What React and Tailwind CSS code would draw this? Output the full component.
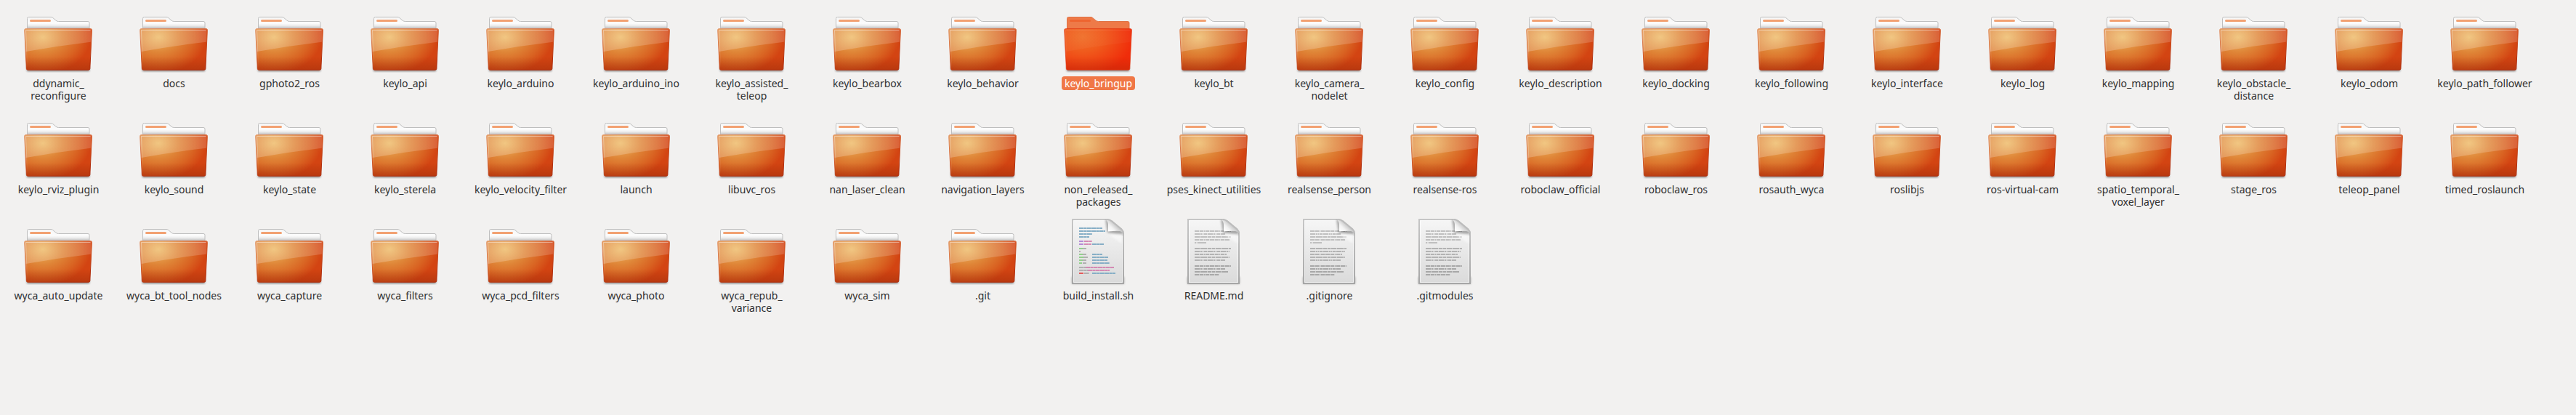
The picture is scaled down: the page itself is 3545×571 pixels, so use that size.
const folders = [
  'ddynamic_\nreconfigure', 'docs', 'gphoto2_ros', 'keylo_api', 'keylo_arduino', 'keylo_arduino_ino',
  'keylo_assisted_\nteleop', 'keylo_bearbox', 'keylo_behavior', 'keylo_bringup', 'keylo_bt',
  'keylo_camera_\nnodelet', 'keylo_config', 'keylo_description', 'keylo_docking', 'keylo_following',
  'keylo_interface', 'keylo_log', 'keylo_mapping', 'keylo_obstacle_\ndistance', 'keylo_odom',
  'keylo_path_follower',
  'keylo_rviz_plugin', 'keylo_sound', 'keylo_state', 'keylo_sterela', 'keylo_velocity_filter', 'launch',
  'libuvc_ros', 'nan_laser_clean', 'navigation_layers', 'non_released_\npackages', 'pses_kinect_utilities',
  'realsense_person', 'realsense-ros', 'roboclaw_official', 'roboclaw_ros', 'rosauth_wyca', 'roslibjs',
  'ros-virtual-cam', 'spatio_temporal_\nvoxel_layer', 'stage_ros', 'teleop_panel', 'timed_roslaunch',
  'wyca_auto_update', 'wyca_bt_tool_nodes', 'wyca_capture', 'wyca_filters', 'wyca_pcd_filters',
  'wyca_photo', 'wyca_repub_\nvariance', 'wyca_sim', '.git',
];

const entries = [
  ...folders.map((name) => ({ name, kind: 'folder', selected: name === 'keylo_bringup' })),
  { name: 'build_install.sh', kind: 'script' },
  { name: 'README.md', kind: 'text' },
  { name: '.gitignore', kind: 'text' },
  { name: '.gitmodules', kind: 'text' },
];

const BLUE = '#86aec6';
const PURPLE = '#b58ad6';
const PINK = '#d48ab4';
const GREEN = '#92d08c';
const GRAY = '#b0b0b0';
const RED = '#e35b5b';

// [y, [x1, x2, colour], ...]
const codeLines = [
  [17, [21, 53, BLUE]],
  [21, [21, 57, BLUE]],
  [25, [21, 39, BLUE]],
  [29, [21, 35, BLUE]],
  [35, [21, 27, PURPLE], [28, 39, PINK]],
  [39, [21, 27, PURPLE], [28, 38, PINK], [39, 55, BLUE]],
  [45, [21, 26, GREEN], [26, 31, GRAY]],
  [49, [21, 23, GRAY]],
  [53, [21, 26, GREEN], [26, 31, GRAY], [39, 53, BLUE]],
  [57, [21, 27, GREEN], [27, 33, GRAY], [39, 61, BLUE]],
  [61, [21, 26, GREEN], [26, 31, GRAY], [39, 60, BLUE]],
  [65, [21, 25, GREEN], [26, 31, GRAY], [39, 63, BLUE]],
  [71, [21, 30, GRAY], [30, 69, PINK]],
  [75, [21, 33, GRAY], [33, 63, PINK]],
  [79, [21, 27, RED], [28, 35, GRAY], [39, 71, BLUE]],
];

const A = '6 1 5 1 1 1 5 1';
const B = '7 1 2 1 1 1 4 1';
const C = '7 1 9 1 5 1 4 1';

// [y, x2, dash pattern]
const textLines = [
  [21, 71, A], [25, 63, B], [29, 71, C], [33, 69, A], [37, 37, '2 2 12 1'],
  [45, 71, C], [49, 69, B], [53, 65, A], [57, 69, C], [61, 63, B],
  [69, 71, A], [73, 63, B], [77, 67, C], [81, 55, A],
];

const FRONT =
  'M2.5 34.5H91.5Q93.5 34.5 93.4 36.5L90.8 89.5Q90.7 91.2 89 91.2H5.2Q3.5 91.2 3.4 89.5L0.7 36.5Q0.6 34.5 2.5 34.5Z';

function SharedDefs() {
  return (
    <svg className="absolute size-0" aria-hidden="true">
      <defs>
        <linearGradient id="tab" x1="0" y1="0" x2="0" y2="1">
          <stop offset="0" stopColor="#f6f6f6" />
          <stop offset="0.4" stopColor="#fcfcfc" />
          <stop offset="0.55" stopColor="#ececec" />
          <stop offset="0.74" stopColor="#bcbcbc" />
        </linearGradient>
        <radialGradient id="body" gradientUnits="userSpaceOnUse" cx="26" cy="46" r="66" gradientTransform="matrix(1 0 0 0.76 0 11)">
          <stop offset="0" stopColor="#edb862" />
          <stop offset="0.42" stopColor="#df8537" />
          <stop offset="0.75" stopColor="#d96322" />
          <stop offset="1" stopColor="#d34412" />
        </radialGradient>
        <radialGradient id="bodyHot" gradientUnits="userSpaceOnUse" cx="26" cy="46" r="70" gradientTransform="matrix(1 0 0 0.75 0 11)">
          <stop offset="0" stopColor="#ef702a" />
          <stop offset="0.4" stopColor="#f05a1c" />
          <stop offset="1" stopColor="#f02c0a" />
        </radialGradient>
        <linearGradient id="foot" x1="0" y1="0" x2="0" y2="1">
          <stop offset="0.68" stopColor="#8a2408" stopOpacity="0" />
          <stop offset="1" stopColor="#8a2408" stopOpacity="0.36" />
        </linearGradient>
        <linearGradient id="rim" x1="0" y1="0" x2="0.5" y2="1">
          <stop offset="0" stopColor="#e2986c" />
          <stop offset="0.55" stopColor="#cf5524" />
          <stop offset="1" stopColor="#b02c0c" />
        </linearGradient>
        <linearGradient id="gloss" x1="0" y1="0" x2="1" y2="0">
          <stop offset="0" stopColor="#fff" stopOpacity="0.22" />
          <stop offset="1" stopColor="#fff" stopOpacity="0.16" />
        </linearGradient>
        <linearGradient id="sheen" x1="0" y1="0" x2="0" y2="1">
          <stop offset="0" stopColor="#fff" stopOpacity="0.4" />
          <stop offset="0.7" stopColor="#fff" stopOpacity="0.1" />
          <stop offset="1" stopColor="#fff" stopOpacity="0" />
        </linearGradient>
        <linearGradient id="paper" x1="0" y1="0" x2="0" y2="1">
          <stop offset="0" stopColor="#f6f6f6" />
          <stop offset="1" stopColor="#dadada" />
        </linearGradient>
        <linearGradient id="paperEdge" x1="0" y1="0" x2="0" y2="1">
          <stop offset="0" stopColor="#c6c6c6" />
          <stop offset="1" stopColor="#a6a6a6" />
        </linearGradient>
        <linearGradient id="curl" gradientUnits="userSpaceOnUse" x1="61" y1="21" x2="72" y2="10">
          <stop offset="0" stopColor="#ffffff" />
          <stop offset="0.45" stopColor="#f2f2f2" />
          <stop offset="1" stopColor="#bcbcbc" />
        </linearGradient>
        <filter id="soft" x="-20%" y="-20%" width="140%" height="140%">
          <feGaussianBlur stdDeviation="1.5" />
        </filter>
        <clipPath id="page">
          <path d="M12 5H60L82 23V93H12Z" />
        </clipPath>
      </defs>
    </svg>
  );
}

function FolderIcon({ selected }) {
  return (
    <svg viewBox="0 0 95 96" className="h-24 w-[95px]" aria-hidden="true">
      <path d="M4 86H90V92Q90 93 89 93H5Q4 93 4 92Z" fill="#000" opacity="0.5" filter="url(#soft)" />
      <path
        d="M4.5 40V20.5Q4.5 18.5 6.5 18.5H37Q38.5 18.5 39.6 19.4L43.8 23Q45.4 24.5 47.5 24.5H88Q90 24.5 90 26.5V40Z"
        fill={selected ? '#ee7a48' : 'url(#tab)'}
        stroke={selected ? '#e07346' : '#bebebe'}
      />
      <rect x="8" y="22" width="29" height="3" rx="1.5" fill={selected ? '#ee6530' : '#f2a172'} />
      <path d={FRONT} fill={selected ? 'url(#bodyHot)' : 'url(#body)'} />
      <path
        d={FRONT}
        fill="url(#foot)"
        stroke={selected ? '#e0310c' : 'url(#rim)'}
        opacity={selected ? 0.7 : 1}
      />
      <path d="M2 35H92.5L91.8 52.7Q47 58 2.6 66L1.2 36Z" fill="url(#gloss)" opacity={selected ? 0.18 : 1} />
      <path d="M4.6 88L2.5 36.5H91.5" fill="none" stroke="url(#sheen)" opacity={selected ? 0.2 : 1} />
    </svg>
  );
}

function DocumentIcon({ script }) {
  return (
    <svg viewBox="0 0 95 96" className="h-24 w-[95px]" aria-hidden="true">
      <path d="M11 84H83V93.5H11Z" fill="#000" opacity="0.3" filter="url(#soft)" />
      <path d="M12 5H60Q63 5 66 7.4L79.5 18.6Q82 21 82 24V93H12Z" fill="url(#paper)" stroke="url(#paperEdge)" strokeWidth="2" />
      <path d="M13.5 91.5V6.5H58M80.5 28V91.5H13.5" fill="none" stroke="#fff" opacity="0.6" />
      {script
        ? codeLines.map(([y, ...runs]) =>
            runs.map(([x1, x2, colour]) => (
              <g key={`${y}-${x1}`} stroke={colour} strokeWidth="2">
                <path d={`M${x1} ${y}H${x2}`} opacity="0.65" />
                <path d={`M${x1} ${y}H${x2}`} strokeDasharray="6 1 3 1 5 1" />
              </g>
            )),
          )
        : textLines.map(([y, x2, dash]) => (
            <g key={y} stroke={y < 40 ? '#bfbfbf' : y < 65 ? '#b3b3b3' : '#a8a8a8'} strokeWidth="2">
              <path d={`M21 ${y}H${x2}`} opacity="0.3" />
              <path d={`M21 ${y}H${x2}`} strokeDasharray={dash} />
            </g>
          ))}
      <g clipPath="url(#page)">
        <path d="M57 5L60 23L81 26V20L62 6Z" fill="#000" opacity="0.3" filter="url(#soft)" />
        <path d="M62 26L80 38V25Z" fill="#fff" opacity="0.5" filter="url(#soft)" />
      </g>
      <path d="M58.5 5.5Q61 8 61 13V21.5Q72 20.5 77 21Q80 21.4 81.5 23Q81 21 79 19L66.5 8.2Q63 5.4 58.5 5.5Z" fill="url(#curl)" />
      <path d="M60 5Q63 5 66 7.4L79.5 18.6Q82 21 82 24" fill="none" stroke="#bcbcbc" strokeWidth="2" />
    </svg>
  );
}

function Entry({ name, kind, selected }) {
  return (
    <li className="flex flex-col items-center">
      <button type="button" aria-pressed={!!selected} className="flex flex-col items-center gap-1">
        {kind === 'folder' ? <FolderIcon selected={selected} /> : <DocumentIcon script={kind === 'script'} />}
        <span
          className={
            selected
              ? 'rounded bg-[#f07746] px-1 py-px whitespace-pre text-white'
              : 'px-1 py-px whitespace-pre'
          }
        >
          {name}
        </span>
      </button>
    </li>
  );
}

export default function App() {
  return (
    <main className="min-h-screen bg-[#f2f1f0] font-['Noto_Sans',sans-serif] text-[14px] leading-[17px] text-[#303030]">
      <SharedDefs />
      <ul className="grid grid-cols-[repeat(auto-fill,159px)] gap-y-[10px] pt-[5px] pl-px">
        {entries.map((entry) => (
          <Entry key={entry.name} {...entry} />
        ))}
      </ul>
    </main>
  );
}
